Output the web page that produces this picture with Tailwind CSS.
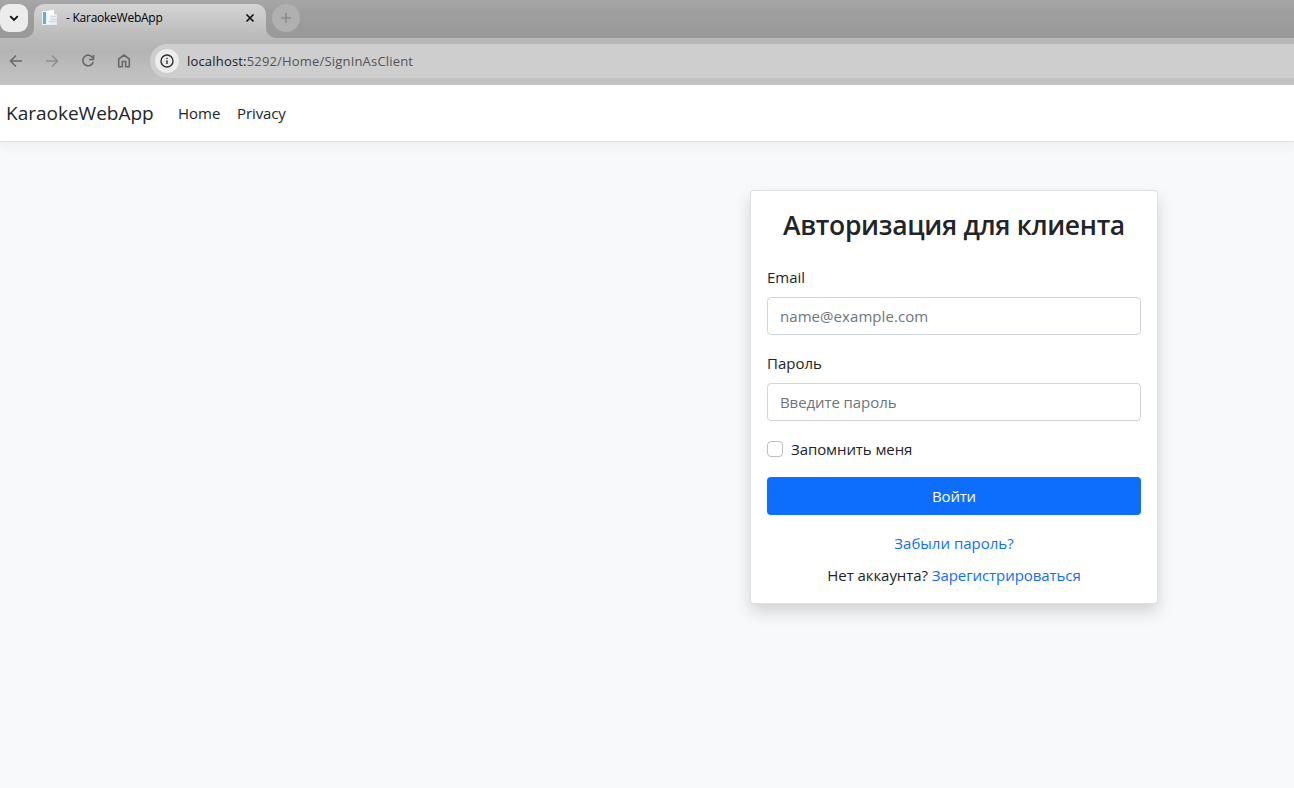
<!DOCTYPE html>
<html lang="ru">
<head>
<meta charset="utf-8">
<title>- KaraokeWebApp</title>
<script src="https://cdn.jsdelivr.net/npm/@tailwindcss/browser@4"></script>
</head>
<body class="h-screen overflow-hidden flex flex-col bg-[#f8f9fa] text-[#212529] font-['Open_Sans','Noto_Sans',sans-serif] text-[15px] leading-6">
<div class="shrink-0 h-[85px] flex flex-col">
  <!-- tab strip -->
  <div class="h-[38px] flex bg-linear-to-b from-[#a7a7a7] via-[#9f9f9f] via-30% to-[#989898] pt-1">
    <div class="size-7 rounded-[9px] bg-[#ececec] flex items-center justify-center">
      <svg class="size-7" viewBox="0 0 28 28" fill="none" stroke="#111" stroke-width="1.8"><path d="M10.2 12.2 14 16l3.8-3.8"/></svg>
    </div>
    <svg class="w-[10px] h-[10px] self-end ml-[-4px]" viewBox="0 0 10 10"><path d="M10 0v10H0A10 10 0 0 0 10 0" fill="#b9b9b9"/></svg>
    <div class="w-[232px] rounded-t-[10px] bg-linear-to-b from-[#d5d5d5] to-[#b9b9b9] flex items-center pl-2 pr-[9px] pb-[6px]">
      <svg class="size-4" viewBox="0 0 16 16"><path d="M0 1h8v14H0z" fill="#eef3f7"/><path d="M1 2h3v12H1z" fill="#62acd8"/><path d="M5 1h6v13H5z" fill="#f4f6fa"/><path d="M8 4h7v11H8z" fill="#e7ebf2"/><path d="M7 0h5v5H7z" fill="#fafbfc"/><path d="M9 6.500h5M9 9.500h6M6 11.500h9" stroke="#d0d7e0"/></svg>
      <span class="ml-2 text-[12px] leading-4 text-black whitespace-nowrap tracking-[-0.25px]">- KaraokeWebApp</span>
      <svg class="size-[14px] ml-auto" viewBox="0 0 14 14" stroke="#111" stroke-width="1.700"><path d="m3.500 3.500 7 7m0-7-7 7"/></svg>
    </div>
    <svg class="w-[10px] h-[10px] self-end" viewBox="0 0 10 10"><path d="M0 0v10h10A10 10 0 0 1 0 0" fill="#b9b9b9"/></svg>
    <div class="size-7 ml-[-4px] rounded-full bg-[#b0b0b0]">
      <svg class="size-7" viewBox="0 0 28 28" stroke="#8b8b8b" stroke-width="1.600"><path d="M9 14h10M14 9v10"/></svg>
    </div>
  </div>
  <!-- toolbar -->
  <div class="h-[47px] flex items-center bg-linear-to-b from-[#b9b9b9] via-[#b4b4b4] via-30% to-[#c5c5c5]">
    <svg class="w-[150px] h-[47px] shrink-0" viewBox="0 0 150 47" fill="none" stroke="#686868" stroke-width="1.6">
      <path d="M22 23H11M16 17.5 10.5 23l5.5 5.5"/>
      <path d="M46 23h11M52 17.5l5.500 5.500-5.500 5.500" stroke="#8f8f8f"/>
      <path d="M92.700 19.800A5.300 5.300 0 1 0 93.200 24M93.500 17v4.500H89"/>
      <path d="M118.700 28.700v-7.700l5.300-4 5.300 4v7.700h-3.600v-5.200h-3.400v5.200z"/>
    </svg>
    <div class="flex-1 h-[34px] mb-px rounded-l-full bg-[#cecece] flex items-center pl-[5px]">
      <div class="size-6 rounded-full bg-[#ededed] flex items-center justify-center">
        <svg class="size-6" viewBox="0 0 24 24" fill="none" stroke="#303030" stroke-width="1.400"><circle cx="12" cy="12" r="6"/><path d="M12 11.200v3.800M12 8.700v1.400"/></svg>
      </div>
      <div class="ml-2 text-[13px] leading-5 whitespace-nowrap tracking-[0.18px] text-[#545454]"><span class="text-[#202020]">localhost:</span>5292/Home/SignInAsClient</div>
    </div>
  </div>
</div>
<!-- site header -->
<header class="shrink-0 h-[57px] bg-white border-b border-[#dee2e6] shadow-[0_4px_12px_rgba(0,0,0,0.05)] flex items-center pl-1.5 whitespace-nowrap">
  <a class="w-[172px] text-[19px] leading-[30px]">KaraokeWebApp</a>
  <a class="w-[59px]">Home</a>
  <a class="tracking-[-0.1px]">Privacy</a>
</header>
<!-- sign-in card -->
<main class="pl-[750px] pt-12">
  <form class="w-[408px] h-[414px] bg-white border border-black/12 rounded-[4px] shadow-[0_8px_16px_rgba(0,0,0,0.15)] p-4 flex flex-col">
    <h2 class="text-center text-[26.500px] leading-[34px] h-[34px] font-semibold tracking-[-0.33px] whitespace-nowrap mb-6 mt-px">Авторизация для клиента</h2>
    <label class="mb-2 mt-[-1px]">Email</label>
    <input class="h-[38px] border border-[#ced4da] rounded-[4px] px-3 tracking-[0.06px] placeholder:text-[#6c757d] placeholder:opacity-100" placeholder="name@example.com">
    <label class="mt-4 mb-2">Пароль</label>
    <input class="h-[38px] border border-[#ced4da] rounded-[4px] px-3 tracking-[-0.08px] placeholder:text-[#6c757d] placeholder:opacity-100" placeholder="Введите пароль">
    <label class="mt-4 flex items-center gap-2 tracking-[-0.08px]"><input type="checkbox" class="appearance-none size-4 border border-black/25 rounded-[4px]">Запомнить меня</label>
    <button class="mt-4 h-[38px] shrink-0 rounded-[4px] bg-[#0d6efd] text-white tracking-[-0.2px]">Войти</button>
    <a class="mt-4 text-center text-[#0d6efd]">Забыли пароль?</a>
    <p class="mt-2 text-center tracking-[-0.07px]">Нет аккаунта? <a class="text-[#0d6efd]">Зарегистрироваться</a></p>
  </form>
</main>
</body>
</html>
